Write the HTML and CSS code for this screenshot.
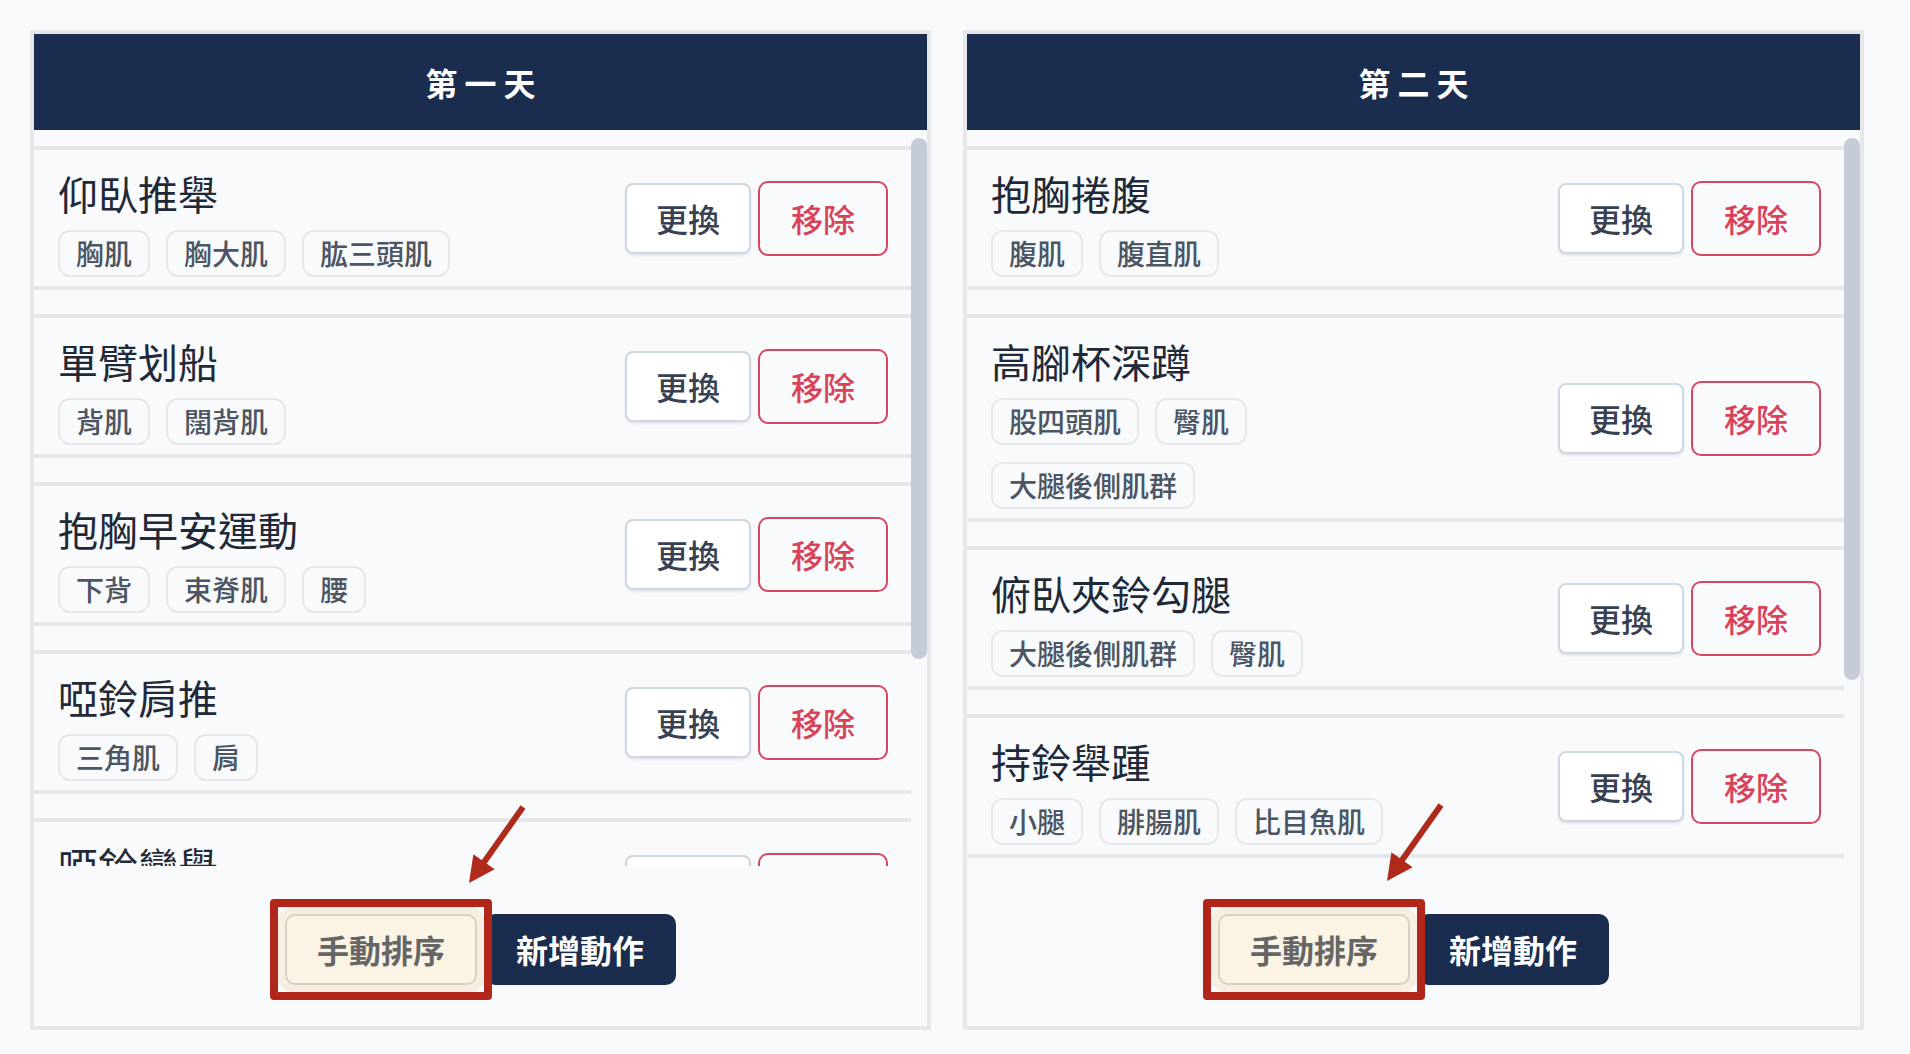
FILE: index.html
```html
<!DOCTYPE html>
<html lang="zh-Hant">
<head>
<meta charset="utf-8">
<title>訓練計畫</title>
<link rel="stylesheet" href="styles.css">
</head>
<body>
<main class="board">
  <section class="day">
    <header class="day-head">第一天</header>
    <div class="list-wrap">
      <div class="list">
        <div class="item">
          <div class="info">
            <div class="name">仰臥推舉</div>
            <div class="tags"><span class="tag">胸肌</span><span class="tag">胸大肌</span><span class="tag">肱三頭肌</span></div>
          </div>
          <div class="actions"><button class="btn swap">更換</button><button class="btn remove">移除</button></div>
        </div>
        <div class="item">
          <div class="info">
            <div class="name">單臂划船</div>
            <div class="tags"><span class="tag">背肌</span><span class="tag">闊背肌</span></div>
          </div>
          <div class="actions"><button class="btn swap">更換</button><button class="btn remove">移除</button></div>
        </div>
        <div class="item">
          <div class="info">
            <div class="name">抱胸早安運動</div>
            <div class="tags"><span class="tag">下背</span><span class="tag">束脊肌</span><span class="tag">腰</span></div>
          </div>
          <div class="actions"><button class="btn swap">更換</button><button class="btn remove">移除</button></div>
        </div>
        <div class="item">
          <div class="info">
            <div class="name">啞鈴肩推</div>
            <div class="tags"><span class="tag">三角肌</span><span class="tag">肩</span></div>
          </div>
          <div class="actions"><button class="btn swap">更換</button><button class="btn remove">移除</button></div>
        </div>
        <div class="item">
          <div class="info">
            <div class="name">啞鈴彎舉</div>
            <div class="tags"><span class="tag">肱二頭肌</span><span class="tag">前臂</span></div>
          </div>
          <div class="actions"><button class="btn swap">更換</button><button class="btn remove">移除</button></div>
        </div>
        <div class="item">
          <div class="info">
            <div class="name">啞鈴側平舉</div>
            <div class="tags"><span class="tag">三角肌</span><span class="tag">肩</span></div>
          </div>
          <div class="actions"><button class="btn swap">更換</button><button class="btn remove">移除</button></div>
        </div>
      </div>
      <div class="thumb" style="height: 521px"></div>
    </div>
    <footer class="foot">
      <span class="sort-wrap"><button class="btn sort">手動排序</button></span><button class="btn add">新增動作</button>
      <svg class="arrow arrow-a" width="70" height="90" viewBox="0 0 70 90" aria-hidden="true">
        <line x1="63" y1="7" x2="22" y2="65" stroke="#b02a1c" stroke-width="6"/>
        <polygon points="9,83 34.6,69.3 13.4,54.3" fill="#b02a1c"/>
      </svg>
    </footer>
  </section>

  <section class="day">
    <header class="day-head">第二天</header>
    <div class="list-wrap">
      <div class="list">
        <div class="item">
          <div class="info">
            <div class="name">抱胸捲腹</div>
            <div class="tags"><span class="tag">腹肌</span><span class="tag">腹直肌</span></div>
          </div>
          <div class="actions"><button class="btn swap">更換</button><button class="btn remove">移除</button></div>
        </div>
        <div class="item">
          <div class="info">
            <div class="name">高腳杯深蹲</div>
            <div class="tags"><span class="tag">股四頭肌</span><span class="tag">臀肌</span><span class="tag">大腿後側肌群</span></div>
          </div>
          <div class="actions"><button class="btn swap">更換</button><button class="btn remove">移除</button></div>
        </div>
        <div class="item">
          <div class="info">
            <div class="name">俯臥夾鈴勾腿</div>
            <div class="tags"><span class="tag">大腿後側肌群</span><span class="tag">臀肌</span></div>
          </div>
          <div class="actions"><button class="btn swap">更換</button><button class="btn remove">移除</button></div>
        </div>
        <div class="item">
          <div class="info">
            <div class="name">持鈴舉踵</div>
            <div class="tags"><span class="tag">小腿</span><span class="tag">腓腸肌</span><span class="tag">比目魚肌</span></div>
          </div>
          <div class="actions"><button class="btn swap">更換</button><button class="btn remove">移除</button></div>
        </div>
        <div class="item">
          <div class="info">
            <div class="name">保加利亞分腿蹲</div>
            <div class="tags"><span class="tag">股四頭肌</span><span class="tag">臀肌</span><span class="tag">大腿後側肌群</span></div>
          </div>
          <div class="actions"><button class="btn swap">更換</button><button class="btn remove">移除</button></div>
        </div>
      </div>
      <div class="thumb" style="height: 542px"></div>
    </div>
    <footer class="foot">
      <span class="sort-wrap"><button class="btn sort">手動排序</button></span><button class="btn add">新增動作</button>
      <svg class="arrow arrow-b" width="70" height="90" viewBox="0 0 70 90" aria-hidden="true">
        <line x1="63" y1="7" x2="22" y2="65" stroke="#b02a1c" stroke-width="6"/>
        <polygon points="9,83 34.6,69.3 13.4,54.3" fill="#b02a1c"/>
      </svg>
    </footer>
  </section>
</main>
</body>
</html>
```
FILE: styles.css
```css
* { box-sizing: border-box; }

html, body {
  margin: 0;
  background: #f8f9fb;
}

body {
  padding: 30px 0 0 30px;
  font-family: "Noto Sans CJK TC", "Noto Sans", sans-serif;
  color: #1f2937;
}

.board {
  display: flex;
  gap: 32px;
  align-items: flex-start;
}

.day {
  width: 901px;
  height: 1000px;
  border: 4px solid #e5e7eb;
  background: #f8fafc;
  display: flex;
  flex-direction: column;
}

.day-head {
  flex: 0 0 96px;
  display: flex;
  align-items: center;
  justify-content: center;
  background: #1b2d4e;
  color: #ffffff;
  font-size: 32px;
  font-weight: 700;
  letter-spacing: 7px;
  padding-left: 7px;
}

.list-wrap {
  flex: 1 1 auto;
  min-height: 0;
  position: relative;
}

.list {
  height: 100%;
  overflow: hidden;
  padding: 16px 16px 16px 0;
  display: flex;
  flex-direction: column;
  gap: 24px;
}

.thumb {
  position: absolute;
  top: 8px;
  right: 0;
  width: 16px;
  border-radius: 8px;
  background: #c5cbd7;
}

.item {
  flex-shrink: 0;
  display: flex;
  align-items: center;
  justify-content: space-between;
  border-top: 4px solid #e5e7eb;
  border-bottom: 4px solid #e5e7eb;
  padding: 0 23px 0 24px;
  background: #f8fafc;
}

.info {
  padding: 16px 0 9px;
}

.name {
  font-size: 40px;
  line-height: 54px;
  font-weight: 400;
  color: #1f2937;
  margin-bottom: 10px;
}

.tags {
  display: flex;
  flex-wrap: wrap;
  gap: 17px 16px;
  max-width: 440px;
}

.tag {
  font-size: 28px;
  line-height: 43px;
  padding: 0 16px;
  border: 2px solid #e6e8ec;
  border-radius: 12px;
  background: #f9fafb;
  color: #4b5563;
  font-weight: 500;
}

.actions {
  display: flex;
  align-items: center;
  gap: 7px;
}

.btn {
  font-family: inherit;
  font-size: 32px;
  line-height: 43px;
  font-weight: 500;
  border: 2px solid transparent;
  margin: 0;
  cursor: pointer;
}

.swap {
  padding: 12px 29px;
  background: #ffffff;
  border-color: #cfd7e3;
  border-radius: 8px;
  color: #374151;
  box-shadow: 0 2px 3px rgba(15, 23, 42, 0.08);
}

.remove {
  padding: 14px 31px;
  background: #f8fafc;
  border-color: #d9455d;
  border-radius: 10px;
  color: #d9435a;
}

.foot {
  flex: 0 0 160px;
  position: relative;
  display: flex;
  justify-content: center;
  align-items: flex-start;
  gap: 8px;
  padding-top: 48px;
}

.sort-wrap {
  position: relative;
  display: flex;
}

.sort-wrap::after {
  content: "";
  position: absolute;
  top: -15px;
  bottom: -15px;
  left: -15px;
  right: -15px;
  border: 8px solid #b3261a;
  border-radius: 4px;
  pointer-events: none;
  z-index: 2;
}

.sort {
  padding: 12px 29.5px;
  background: #fbf4e4;
  border-color: #d7d1c4;
  border-radius: 10px;
  color: #666666;
  font-weight: 600;
  box-shadow: 0 0 0 8px #f6efe1;
}

.add {
  padding: 12px 29.5px;
  background: #1b2d4e;
  border-color: #1b2d4e;
  border-radius: 10px;
  color: #ffffff;
  font-weight: 700;
}

.arrow {
  position: absolute;
  z-index: 3;
}

.arrow-a { left: 426px; top: -66px; }
.arrow-b { left: 411px; top: -68px; }
```
